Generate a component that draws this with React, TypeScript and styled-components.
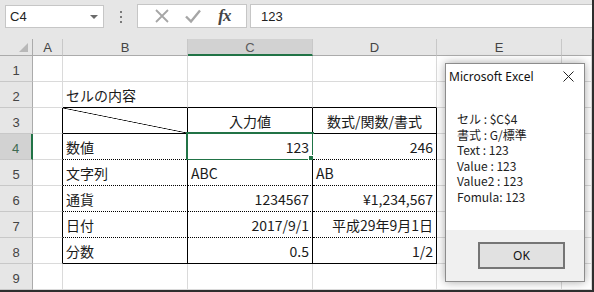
import styled, { createGlobalStyle, css } from 'styled-components';

const GlobalStyle = createGlobalStyle`
  html, body {
    margin: 0;
    padding: 0;
    background: #ffffff;
  }
  * {
    box-sizing: border-box;
  }
`;

type Line = 'grid' | 'solid' | 'dotted';

const lineStyle = (l: Line) =>
  l === 'solid' ? '1px solid #000' : l === 'dotted' ? '1px dotted #000' : '1px solid #dadada';

const Frame = styled.div`
  position: relative;
  width: 594px;
  height: 292px;
  background: #e6e6e6;
  border-right: 2px solid #2e2e2e;
  border-bottom: 2px solid #2e2e2e;
  overflow: hidden;
  font-family: 'Liberation Sans', Arial, sans-serif;
`;

const FormulaBar = styled.div`
  display: flex;
  align-items: flex-start;
  height: 39px;
  padding-top: 4px;
`;

const NameBox = styled.div`
  display: flex;
  align-items: center;
  justify-content: space-between;
  margin: 1px 0 0 5px;
  width: 99px;
  height: 23px;
  padding: 0 4px 0 4px;
  background: #fff;
  border: 1px solid #c6c6c6;
  font-size: 13px;
  color: #222;
`;

const Caret = styled.span`
  width: 0;
  height: 0;
  border-left: 4px solid transparent;
  border-right: 4px solid transparent;
  border-top: 4px solid #6a6a6a;
  margin-right: 1px;
`;

const Dots = styled.div`
  width: 33px;
  display: flex;
  flex-direction: column;
  align-items: center;
  gap: 3px;
  padding-top: 7px;

  span {
    width: 2px;
    height: 2px;
    background: #7a7a7a;
  }
`;

const IconBox = styled.div`
  display: flex;
  align-items: center;
  width: 110px;
  height: 24px;
  padding: 0 6px 0 8px;
  background: #fff;
  border: 1px solid #c6c6c6;
`;

const IconSlot = styled.div`
  width: 36px;
  display: flex;
  justify-content: center;
  align-items: center;
`;

const Fx = styled.span`
  font-family: 'Liberation Serif', 'DejaVu Serif', serif;
  font-style: italic;
  font-weight: bold;
  font-size: 17px;
  color: #444;
  letter-spacing: -1px;
`;

const FormulaInput = styled.div`
  flex: 1;
  margin-left: 3px;
  height: 24px;
  padding-left: 10px;
  display: flex;
  align-items: center;
  background: #fff;
  border-top: 1px solid #c6c6c6;
  border-bottom: 1px solid #c6c6c6;
  border-left: 1px solid #c6c6c6;
  font-size: 13px;
  color: #222;
`;

const Sheet = styled.div`
  display: grid;
  grid-template-columns: 33px 30px 125px 125px 124px 125px 1fr;
  grid-template-rows: 17px repeat(9, 26px);
`;

const Corner = styled.div`
  position: relative;
  background: #e6e6e6;
  border-right: 1px solid #ababab;
  border-bottom: 1px solid #ababab;

  &::after {
    content: '';
    position: absolute;
    right: 4px;
    bottom: 3px;
    border-left: 9px solid transparent;
    border-bottom: 9px solid #b8b8b8;
  }
`;

const ColHead = styled.div<{ $active?: boolean }>`
  display: flex;
  align-items: center;
  justify-content: center;
  font-size: 13px;
  padding-top: 1px;
  color: #444;
  background: #e6e6e6;
  border-right: 1px solid #c8c8c8;
  border-bottom: 1px solid #ababab;
  ${(p) =>
    p.$active &&
    css`
      background: #d2d2d2;
      color: #5a5a5a;
      border-bottom: 2px solid #217346;
    `}
`;

const RowHead = styled.div<{ $active?: boolean }>`
  display: flex;
  align-items: flex-end;
  justify-content: center;
  padding-bottom: 3px;
  font-size: 13px;
  color: #444;
  background: #e6e6e6;
  border-right: 1px solid #ababab;
  border-bottom: 1px solid #c8c8c8;
  ${(p) =>
    p.$active &&
    css`
      background: #d2d2d2;
      color: #3f6b52;
      border-right: 2px solid #217346;
    `}
`;

const Cell = styled.div<{ $right: Line; $bottom: Line; $align?: 'left' | 'right' | 'center'; $diag?: boolean }>`
  position: relative;
  display: flex;
  align-items: flex-end;
  justify-content: ${(p) => (p.$align === 'right' ? 'flex-end' : p.$align === 'center' ? 'center' : 'flex-start')};
  padding: 0 3px 3px 3px;
  background: #fff;
  border-right: ${(p) => lineStyle(p.$right)};
  border-bottom: ${(p) => lineStyle(p.$bottom)};
  font-family: 'Noto Sans CJK JP', 'Liberation Sans', sans-serif;
  font-size: 14px;
  line-height: 18px;
  color: #1a1a1a;
  white-space: nowrap;
  ${(p) =>
    p.$diag &&
    css`
      background: linear-gradient(
        to top right,
        #fff calc(50% - 0.7px),
        #000 50%,
        #fff calc(50% + 0.7px)
      );
    `}
`;

const Selection = styled.div`
  position: absolute;
  left: -2px;
  top: -2px;
  right: -2px;
  bottom: -2px;
  border: 2px solid #217346;
  pointer-events: none;

  &::after {
    content: '';
    position: absolute;
    right: -4px;
    bottom: -4px;
    width: 6px;
    height: 6px;
    background: #217346;
    border: 1px solid #fff;
  }
`;

const Dialog = styled.div`
  position: absolute;
  left: 445px;
  top: 63px;
  width: 140px;
  height: 219px;
  display: flex;
  flex-direction: column;
  background: #fff;
  border: 1px solid #8c8c8c;
  box-shadow: 0 0 9px rgba(0, 0, 0, 0.35);
  font-family: 'Noto Sans CJK JP', 'Noto Sans', sans-serif;
`;

const TitleBar = styled.div`
  display: flex;
  align-items: center;
  justify-content: space-between;
  height: 24px;
  padding: 0 10px 0 3px;
  font-family: 'Noto Sans', 'Open Sans', sans-serif;
  font-size: 12px;
  color: #111;
`;

const Body = styled.div`
  flex: 1;
  padding: 23px 0 0 11px;
  font-size: 12px;
  line-height: 15.5px;
  color: #222;
`;

const Footer = styled.div`
  height: 51px;
  display: flex;
  align-items: center;
  justify-content: flex-end;
  padding: 0 19px 0 0;
  background: #f0f0f0;
`;

const OkButton = styled.div`
  width: 87px;
  height: 27px;
  display: flex;
  align-items: center;
  justify-content: center;
  background: #e1e1e1;
  border: 2px solid #757575;
  font-family: 'Noto Sans', 'Open Sans', sans-serif;
  font-size: 12px;
  color: #111;
`;

type CellDef = {
  text?: string;
  align?: 'left' | 'right' | 'center';
  diag?: boolean;
};

const tableRows: CellDef[][] = [
  [{ diag: true }, { text: '入力値', align: 'center' }, { text: '数式/関数/書式', align: 'center' }],
  [{ text: '数値' }, { text: '123', align: 'right' }, { text: '246', align: 'right' }],
  [{ text: '文字列' }, { text: 'ABC' }, { text: 'AB' }],
  [{ text: '通貨' }, { text: '1234567', align: 'right' }, { text: '¥1,234,567', align: 'right' }],
  [{ text: '日付' }, { text: '2017/9/1', align: 'right' }, { text: '平成29年9月1日', align: 'right' }],
  [{ text: '分数' }, { text: '0.5', align: 'right' }, { text: '1/2', align: 'right' }],
];

const columns = ['A', 'B', 'C', 'D', 'E', ''];

function cellAt(row: number, col: number) {
  // row: 1..9, col: 0..5 (A..)
  let right: Line = 'grid';
  let bottom: Line = 'grid';
  let def: CellDef = {};
  const inTable = row >= 3 && row <= 8 && col >= 1 && col <= 3;

  if (row >= 3 && row <= 8 && col === 0) right = 'solid';
  if (row === 2 && col >= 1 && col <= 3) bottom = 'solid';
  if (inTable) {
    right = 'solid';
    bottom = row === 3 || row === 8 ? 'solid' : 'dotted';
    def = tableRows[row - 3][col - 1];
  }
  if (row === 2 && col === 1) def = { text: 'セルの内容' };

  return (
    <Cell key={`${row}-${col}`} $right={right} $bottom={bottom} $align={def.align} $diag={def.diag}>
      {def.text}
      {row === 4 && col === 2 && <Selection />}
    </Cell>
  );
}

export default function App() {
  const rows = [1, 2, 3, 4, 5, 6, 7, 8, 9];
  return (
    <>
      <GlobalStyle />
      <Frame>
        <FormulaBar>
          <NameBox>
            C4
            <Caret />
          </NameBox>
          <Dots>
            <span />
            <span />
            <span />
          </Dots>
          <IconBox>
            <IconSlot>
              <svg width="16" height="16" viewBox="0 0 16 16">
                <path d="M2 2 L14 14 M14 2 L2 14" stroke="#a6a6a6" strokeWidth="1.8" fill="none" />
              </svg>
            </IconSlot>
            <IconSlot>
              <svg width="18" height="16" viewBox="0 0 18 16">
                <path d="M2 8.5 L7 13.5 L16 2.5" stroke="#a6a6a6" strokeWidth="2.4" fill="none" />
              </svg>
            </IconSlot>
            <IconSlot>
              <Fx>fx</Fx>
            </IconSlot>
          </IconBox>
          <FormulaInput>123</FormulaInput>
        </FormulaBar>
        <Sheet>
          <Corner />
          {columns.map((c, i) => (
            <ColHead key={i} $active={c === 'C'}>
              {c}
            </ColHead>
          ))}
          {rows.map((r) => [
            <RowHead key={`h${r}`} $active={r === 4}>
              {r}
            </RowHead>,
            ...columns.map((_, ci) => cellAt(r, ci)),
          ])}
        </Sheet>
        <Dialog>
          <TitleBar>
            Microsoft Excel
            <svg width="11" height="11" viewBox="0 0 11 11">
              <path d="M0.5 0.5 L10.5 10.5 M10.5 0.5 L0.5 10.5" stroke="#222" strokeWidth="1" fill="none" />
            </svg>
          </TitleBar>
          <Body>
            <div>セル : $C$4</div>
            <div>書式 : G/標準</div>
            <div>Text : 123</div>
            <div>Value : 123</div>
            <div>Value2 : 123</div>
            <div>Fomula: 123</div>
          </Body>
          <Footer>
            <OkButton>OK</OkButton>
          </Footer>
        </Dialog>
      </Frame>
    </>
  );
}
